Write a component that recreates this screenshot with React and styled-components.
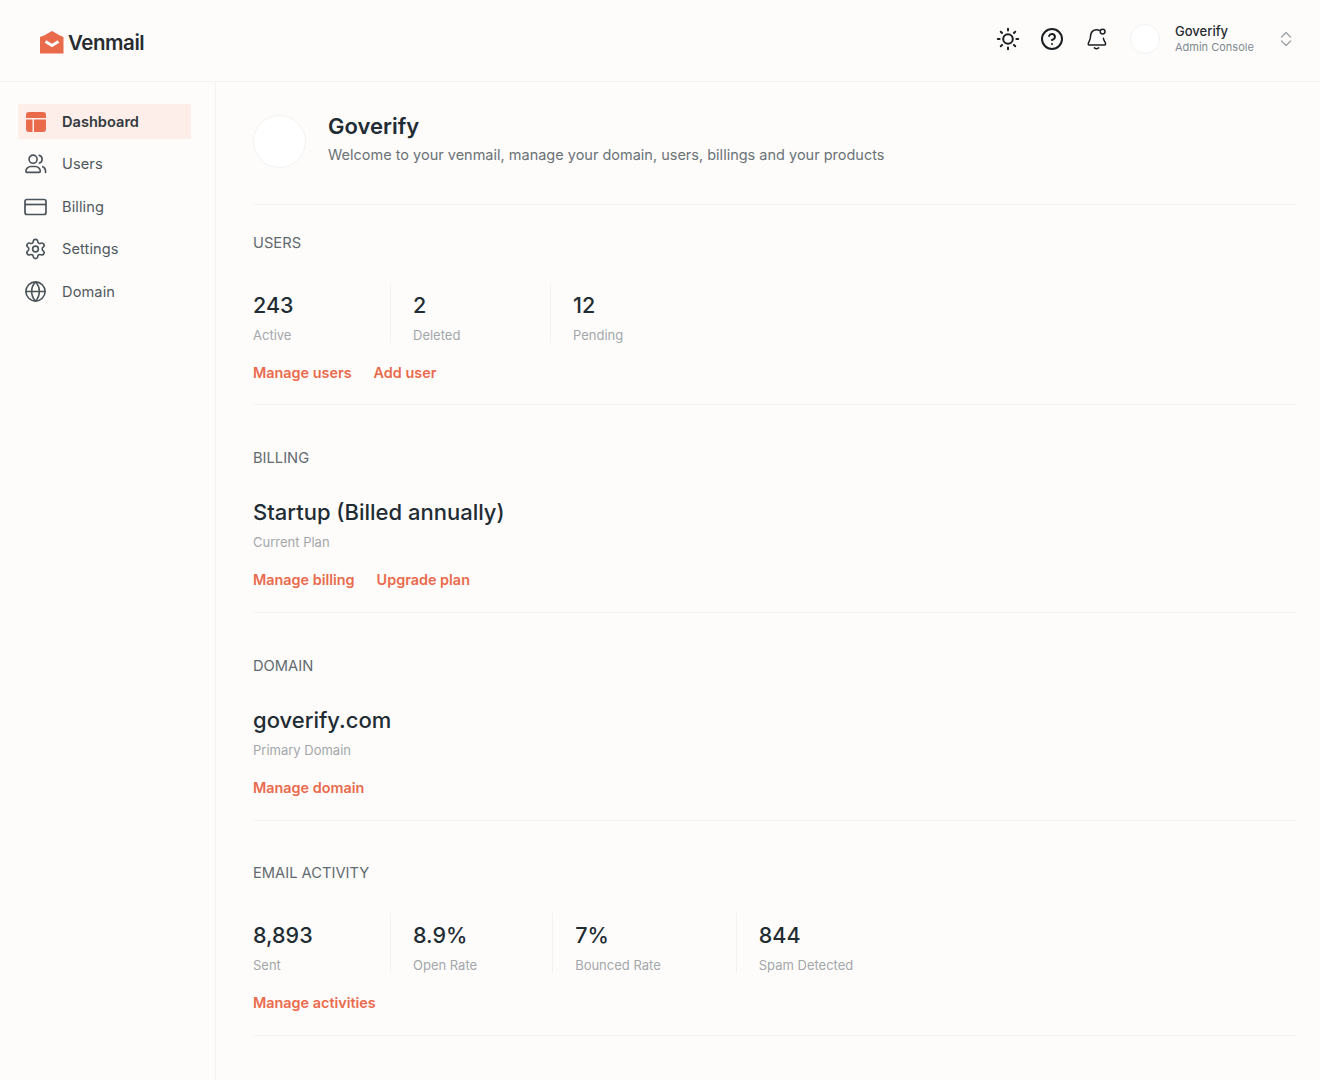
import React from "react";
import styled, { createGlobalStyle } from "styled-components";
import { CircleHelp, Globe, Settings } from "lucide-react";

const GlobalStyle = createGlobalStyle`
  html, body {
    margin: 0;
    padding: 0;
    background: #fdfcfb;
    font-family: Inter, "Noto Sans", sans-serif;
    color: #1f2a30;
  }
  * {
    box-sizing: border-box;
  }
`;

const Page = styled.div`
  width: 100%;
  height: 1080px;
  overflow: hidden;
  display: flex;
  flex-direction: column;
`;

const Header = styled.header`
  height: 82px;
  flex-shrink: 0;
  display: flex;
  align-items: center;
  justify-content: space-between;
  padding: 0 27px 0 40px;
  border-bottom: 1px solid #f3f2f1;
`;

const Logo = styled.div`
  display: flex;
  align-items: center;
  gap: 4px;
  font-size: 20.5px;
  font-weight: 600;
  letter-spacing: -0.45px;
  color: #272c30;
  margin-top: 3px;
`;

const HeaderRight = styled.div`
  display: flex;
  align-items: center;
  margin-top: -4px;
`;

const IconButton = styled.div`
  width: 24px;
  height: 24px;
  display: flex;
  align-items: center;
  justify-content: center;
  margin-right: ${(p) => p.$gap}px;
  color: #1b1f22;
`;

const Avatar = styled.div`
  width: ${(p) => p.$size}px;
  height: ${(p) => p.$size}px;
  flex-shrink: 0;
  margin-top: ${(p) => p.$top || 0}px;
  border-radius: 50%;
  background: #ffffff;
  border: 1px solid #f3f2f1;
`;

const Account = styled.div`
  margin-left: 15px;
  width: 104px;
  display: flex;
  flex-direction: column;
  gap: 1px;
`;

const AccountName = styled.div`
  font-size: 13px;
  line-height: 16px;
  font-weight: 500;
  color: #272c30;
`;

const AccountRole = styled.div`
  font-size: 11px;
  line-height: 14px;
  color: #7f8a92;
`;

const Body = styled.div`
  flex: 1;
  display: flex;
  min-height: 0;
`;

const Sidebar = styled.nav`
  width: 216px;
  flex-shrink: 0;
  border-right: 1px solid #f3f2f1;
  padding: 22px 24px 0 18px;
  display: flex;
  flex-direction: column;
  gap: 7.5px;
`;

const NavItem = styled.div`
  height: 35px;
  display: flex;
  align-items: center;
  gap: 14px;
  padding-left: 7px;
  font-size: 14.6px;
  font-weight: ${(p) => (p.$active ? 600 : 400)};
  letter-spacing: ${(p) => (p.$active ? 0 : "0.1px")};
  color: ${(p) => (p.$active ? "#343a3e" : "#50585d")};
  background: ${(p) => (p.$active ? "#fdeee9" : "transparent")};
`;

const NavIcon = styled.div`
  width: 23px;
  height: 23px;
  margin-left: -1px;
  margin-right: 1px;
  display: flex;
  align-items: center;
  justify-content: center;
  color: #4b5459;
`;

const Main = styled.main`
  flex: 1;
  padding: 32px 24px 0 37px;
`;

const Intro = styled.div`
  height: 91px;
  display: flex;
  align-items: flex-start;
  gap: 22px;
  border-bottom: 1px solid #f3f2f1;
`;

const IntroText = styled.div`
  display: flex;
  flex-direction: column;
  gap: 4px;
`;

const Company = styled.h1`
  margin: -2px 0 0;
  font-size: 22px;
  line-height: 28px;
  font-weight: 600;
  color: #1f2c33;
`;

const Welcome = styled.p`
  margin: 0;
  font-size: 14.5px;
  line-height: 22px;
  color: #6b7276;
`;

const Section = styled.section`
  height: ${(p) => p.$height}px;
  padding-top: ${(p) => p.$top}px;
  border-bottom: 1px solid #f3f2f1;
`;

const SectionTitle = styled.h2`
  margin: 0;
  font-size: 14.7px;
  line-height: 20px;
  font-weight: 400;
  color: #626a6f;
`;

const StatRow = styled.div`
  display: flex;
  margin-top: 30px;
`;

const Stat = styled.div`
  min-width: ${(p) => (p.$first ? 137 : 160)}px;
  height: 60px;
  padding-left: ${(p) => (p.$first ? 0 : 22)}px;
  padding-right: 75px;
  border-left: ${(p) => (p.$first ? "none" : "1px solid #f3f2f1")};
  display: flex;
  flex-direction: column;
  justify-content: flex-end;
`;

const StatValue = styled.div`
  font-size: 21.5px;
  line-height: 28px;
  font-weight: 500;
  color: #1f2c33;
`;

const Caption = styled.div`
  margin-top: ${(p) => p.$top}px;
  font-size: 13px;
  line-height: 16px;
  color: #a3a7aa;
`;

const BigValue = styled.div`
  margin-top: 29px;
  font-size: 22px;
  line-height: 30px;
  font-weight: 500;
  color: #1f2c33;
`;

const Links = styled.div`
  display: flex;
  gap: 22px;
  margin-top: ${(p) => p.$top}px;
`;

const ActionLink = styled.a`
  font-size: 14.4px;
  line-height: 20px;
  font-weight: 600;
  color: #ea6a4c;
`;

const LogoMark = () => (
  <svg width="24" height="23" viewBox="0 0 24 23">
    <path d="M12 0 L19.5 4.2 L23.5 6 V22.5 H0 V6 L4.5 4.2 Z" fill="#ea6a4c" />
    <path d="M5.5 10.5 L12 14.5 L18.5 10.5" fill="none" stroke="#fdfcfb" strokeWidth="3" />
  </svg>
);

const SunIcon = () => (
  <svg width="24" height="24" viewBox="0 0 24 24" fill="none" stroke="currentColor" strokeWidth="2" strokeLinecap="round">
    <circle cx="12" cy="12" r="4.8" />
    <path d="M12 1.8v1.8M12 20.4v1.8M1.8 12h1.8M20.4 12h1.8M4.8 4.8 6 6M18 18l1.2 1.2M4.8 19.2 6 18M18 6l1.2-1.2" />
  </svg>
);

const BellIcon = () => (
  <svg width="22" height="24" viewBox="0 0 22 24" fill="none" stroke="currentColor" strokeWidth="1.5" strokeLinecap="round" strokeLinejoin="round">
    <path d="M13.2 3.3A6 6 0 0 0 4.6 8.7c0 4.5-2.4 6.6-2.4 8.2 0 .8.6 1.2 1.4 1.2h14.6c.8 0 1.4-.4 1.4-1.2 0-1.5-1.7-2.8-2.2-5.6" />
    <path d="M8.4 20.8c1.2 1 3 1 4.2 0" />
    <circle cx="16.6" cy="4.6" r="2.4" />
  </svg>
);

const ChevronsIcon = () => (
  <svg width="14" height="18" viewBox="0 0 14 18" fill="none" stroke="#9aa1a6" strokeWidth="1.3" strokeLinecap="round" strokeLinejoin="round">
    <path d="M2.5 7 7 2.5 11.5 7M2.5 11 7 15.5l4.5-4.5" />
  </svg>
);

const LayoutIcon = () => (
  <svg width="20" height="20" viewBox="0 0 20 20" fill="#ea6a4c">
    <path d="M0 3a3 3 0 0 1 3-3h14a3 3 0 0 1 3 3v3H0z" />
    <path d="M0 7.5h6.5V20H3a3 3 0 0 1-3-3z" />
    <path d="M8 7.5h12V17a3 3 0 0 1-3 3H8z" />
  </svg>
);

const UsersIcon = () => (
  <svg width="24" height="24" viewBox="0 0 24 24" fill="none" stroke="currentColor" strokeWidth="1.7" strokeLinecap="round" strokeLinejoin="round">
    <circle cx="9.5" cy="7" r="4.2" />
    <path d="M2 19.6c0-3 2.5-5 5-5h5c2.5 0 5 2 5 5 0 .8-.5 1.2-1.2 1.2H3.2c-.7 0-1.2-.4-1.2-1.2z" />
    <path d="M16 3a4.2 4.2 0 0 1 0 8M19.5 14.8c2 .8 3 2.6 3 4.8v1.2" />
  </svg>
);

const CardIcon = () => (
  <svg width="23" height="18" viewBox="0 0 23 18" fill="none" stroke="currentColor" strokeWidth="1.7">
    <rect x="1" y="1.5" width="21" height="15" rx="2" />
    <path d="M1 6.5h21" />
  </svg>
);

const navItems = [
  { label: "Dashboard", icon: <LayoutIcon />, active: true },
  { label: "Users", icon: <UsersIcon /> },
  { label: "Billing", icon: <CardIcon /> },
  { label: "Settings", icon: <Settings size={24} strokeWidth={1.7} /> },
  { label: "Domain", icon: <Globe size={23} strokeWidth={1.7} /> },
];

function StatGroup({ stats }) {
  return (
    <StatRow>
      {stats.map((s, i) => (
        <Stat key={s.label} $first={i === 0}>
          <StatValue>{s.value}</StatValue>
          <Caption $top={8}>{s.label}</Caption>
        </Stat>
      ))}
    </StatRow>
  );
}

export default function App() {
  return (
    <Page>
      <GlobalStyle />
      <Header>
        <Logo>
          <LogoMark />
          Venmail
        </Logo>
        <HeaderRight>
          <IconButton $gap={20}><SunIcon /></IconButton>
          <IconButton $gap={21}><CircleHelp size={24} strokeWidth={2} /></IconButton>
          <IconButton $gap={21}><BellIcon /></IconButton>
          <Avatar $size={30} />
          <Account>
            <AccountName>Goverify</AccountName>
            <AccountRole>Admin Console</AccountRole>
          </Account>
          <ChevronsIcon />
        </HeaderRight>
      </Header>
      <Body>
        <Sidebar>
          {navItems.map((item) => (
            <NavItem key={item.label} $active={item.active}>
              <NavIcon>{item.icon}</NavIcon>
              {item.label}
            </NavItem>
          ))}
        </Sidebar>
        <Main>
          <Intro>
            <Avatar $size={53} $top={1} />
            <IntroText>
              <Company>Goverify</Company>
              <Welcome>Welcome to your venmail, manage your domain, users, billings and your products</Welcome>
            </IntroText>
          </Intro>
          <Section $height={200} $top={28}>
            <SectionTitle>USERS</SectionTitle>
            <StatGroup
              stats={[
                { value: "243", label: "Active" },
                { value: "2", label: "Deleted" },
                { value: "12", label: "Pending" },
              ]}
            />
            <Links $top={20}>
              <ActionLink>Manage users</ActionLink>
              <ActionLink>Add user</ActionLink>
            </Links>
          </Section>
          <Section $height={208} $top={43}>
            <SectionTitle>BILLING</SectionTitle>
            <BigValue>Startup (Billed annually)</BigValue>
            <Caption $top={7}>Current Plan</Caption>
            <Links $top={20}>
              <ActionLink>Manage billing</ActionLink>
              <ActionLink>Upgrade plan</ActionLink>
            </Links>
          </Section>
          <Section $height={208} $top={43}>
            <SectionTitle>DOMAIN</SectionTitle>
            <BigValue>goverify.com</BigValue>
            <Caption $top={7}>Primary Domain</Caption>
            <Links $top={20}>
              <ActionLink>Manage domain</ActionLink>
            </Links>
          </Section>
          <Section $height={215} $top={42}>
            <SectionTitle>EMAIL ACTIVITY</SectionTitle>
            <StatGroup
              stats={[
                { value: "8,893", label: "Sent" },
                { value: "8.9%", label: "Open Rate" },
                { value: "7%", label: "Bounced Rate" },
                { value: "844", label: "Spam Detected" },
              ]}
            />
            <Links $top={20}>
              <ActionLink>Manage activities</ActionLink>
            </Links>
          </Section>
        </Main>
      </Body>
    </Page>
  );
}
